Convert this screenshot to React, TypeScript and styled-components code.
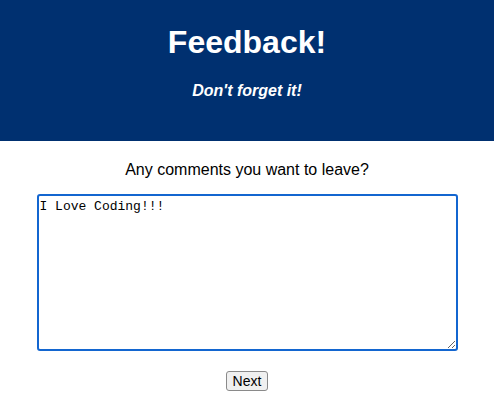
import React from "react";
import styled, { createGlobalStyle } from "styled-components";

const Global = createGlobalStyle`
  html, body { margin: 0; padding: 0; background: #fff; }
  body { font-family: "Liberation Sans", Arial, sans-serif; color: #000; }
`;

const Header = styled.header`
  background: #003070;
  color: #fff;
  height: 141px;
  display: flex;
  flex-direction: column;
  align-items: center;
  padding-top: 22px;
  box-sizing: border-box;
`;

const Title = styled.h1`
  margin: 0;
  font-size: 32px;
  font-weight: bold;
  line-height: 40px;
`;

const Subtitle = styled.h3`
  margin: 19px 0 0;
  font-size: 16px;
  font-weight: bold;
  font-style: italic;
  line-height: 20px;
`;

const Main = styled.main`
  display: flex;
  flex-direction: column;
  align-items: center;
  padding-top: 19px;
`;

const Question = styled.p`
  margin: 0;
  font-size: 16px;
  line-height: 20px;
`;

const Comment = styled.textarea`
  margin-top: 14px;
  width: 421px;
  height: 157px;
  box-sizing: border-box;
  border: 2px solid #1366d0;
  border-radius: 3px;
  padding: 3px 1px;
  font-family: "Liberation Mono", "Courier New", monospace;
  font-size: 13px;
  line-height: 15px;
  outline: none;
  resize: both;
  color: #000;
`;

const NextButton = styled.button`
  margin-top: 20px;
  font-family: "Liberation Sans", Arial, sans-serif;
  font-size: 14px;
  padding: 1px 6px;
  height: 20px;
  line-height: 16px;
  background: #f0f0f0;
  border: 1px solid #8a8a8a;
  border-radius: 3px;
  color: #000;
`;

export default function App() {
  return (
    <>
      <Global />
      <Header>
        <Title>Feedback!</Title>
        <Subtitle>Don't forget it!</Subtitle>
      </Header>
      <Main>
        <Question>Any comments you want to leave?</Question>
        <Comment defaultValue="I Love Coding!!!" />
        <NextButton>Next</NextButton>
      </Main>
    </>
  );
}
